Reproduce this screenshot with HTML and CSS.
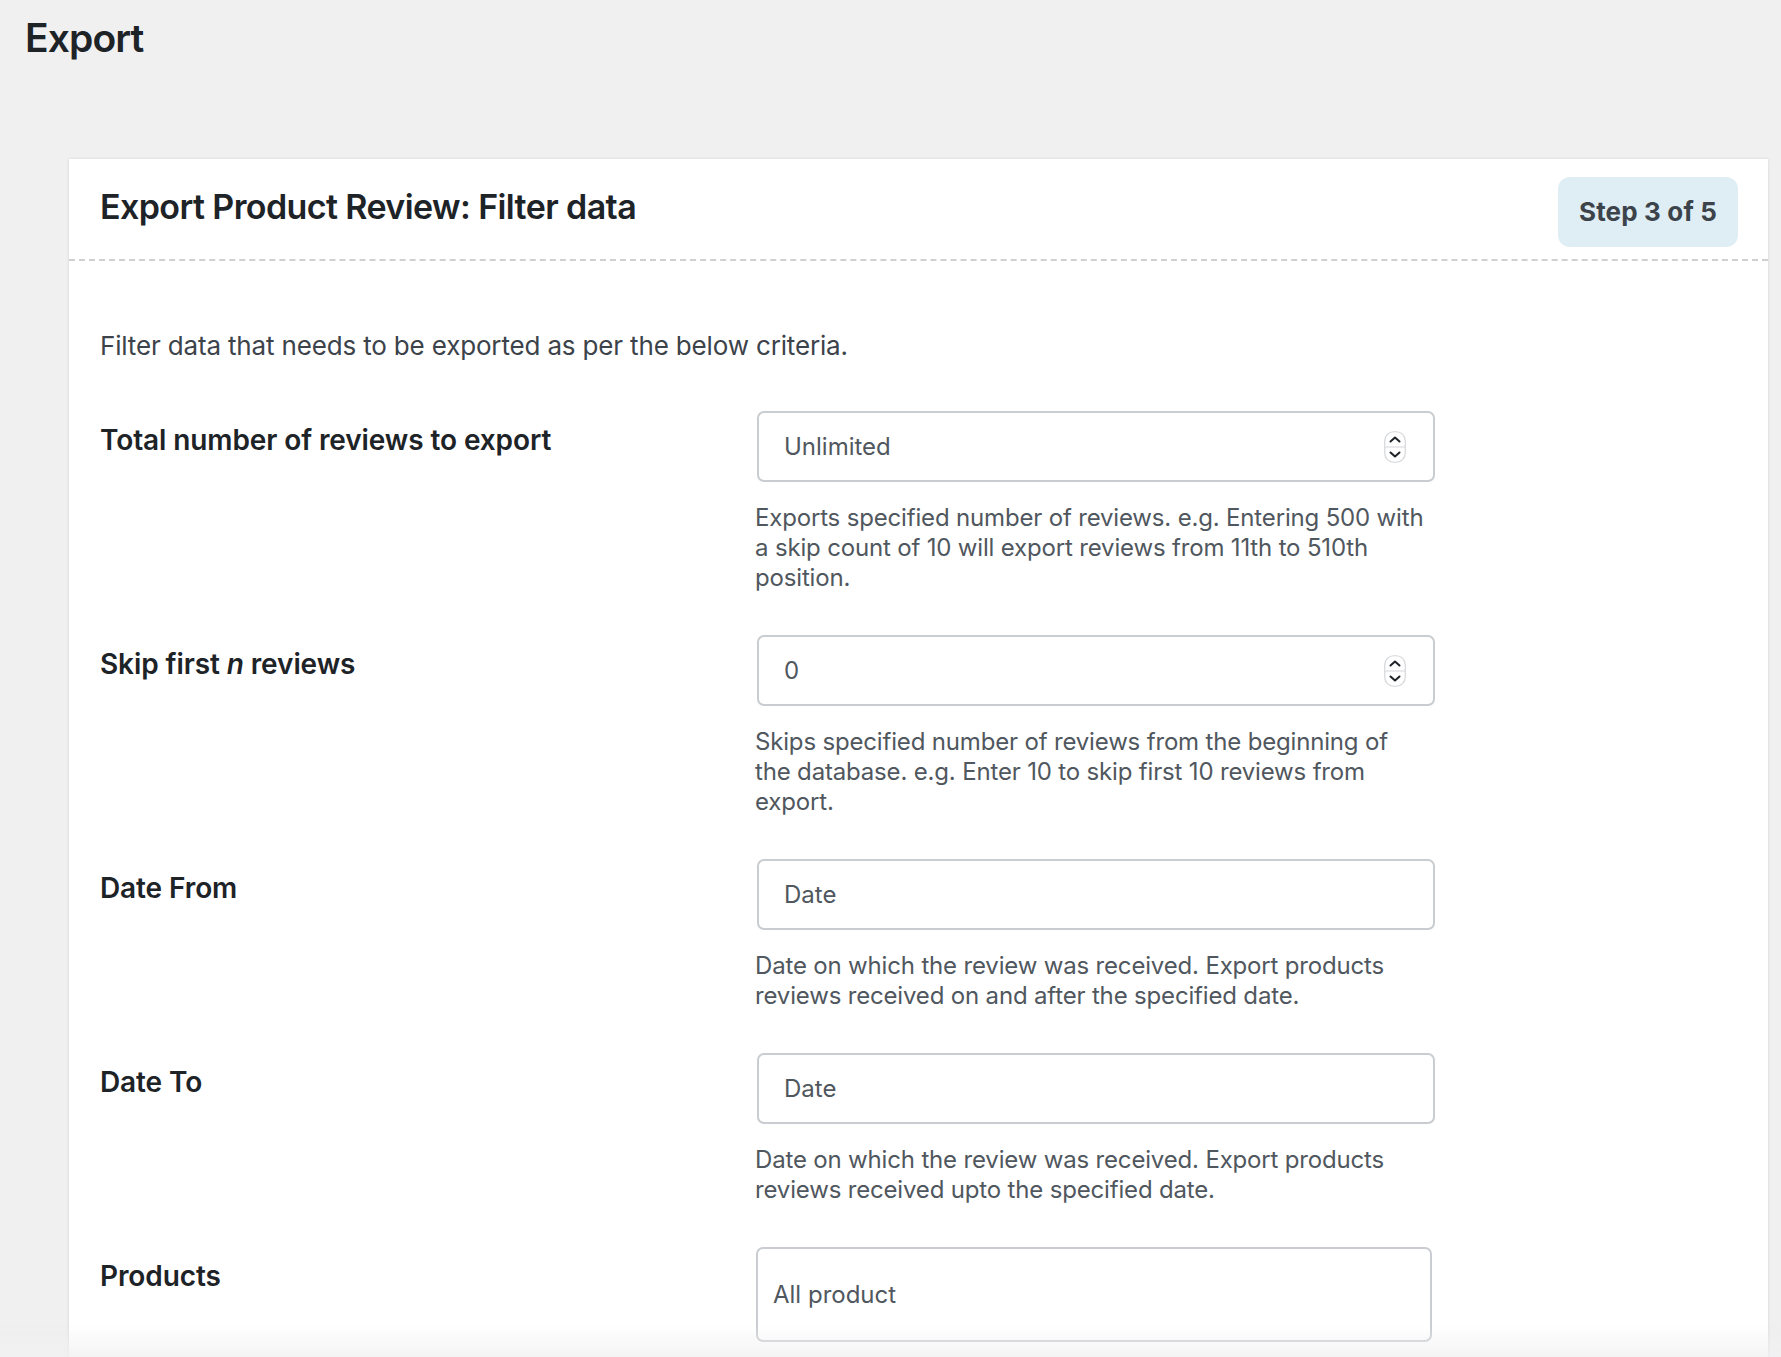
FILE: index.html
```html
<!DOCTYPE html>
<html lang="en">
<head>
<meta charset="utf-8">
<title>Export</title>
<link rel="stylesheet" href="styles.css">
</head>
<body>
<div class="wrap">
  <h1 class="page-title">Export</h1>
  <div class="card">
    <div class="card-head">
      <h2 class="card-title">Export Product Review: Filter data</h2>
      <span class="step">Step 3 of 5</span>
    </div>
    <div class="card-body">
      <p class="intro">Filter data that needs to be exported as per the below criteria.</p>
      <div class="form">
        <div class="row">
          <div class="label">Total number of reviews to export</div>
          <div class="field">
            <div class="input-wrap">
              <input class="input" type="text" placeholder="Unlimited">
              <span class="spin"><svg width="22" height="32" viewBox="0 0 22 32"><rect x="0.75" y="0.75" width="20.5" height="30.5" rx="9" fill="#fff" stroke="#d4d6d9" stroke-width="1.2"/><line x1="1" y1="16" x2="21" y2="16" stroke="#dcdde0" stroke-width="1.2"/><path d="M6.5 10.5 L11 6.5 L15.5 10.5" fill="none" stroke="#1d2327" stroke-width="2" stroke-linecap="round" stroke-linejoin="round"/><path d="M6.5 21.5 L11 25.5 L15.5 21.5" fill="none" stroke="#1d2327" stroke-width="2" stroke-linecap="round" stroke-linejoin="round"/></svg></span>
            </div>
            <p class="desc">Exports specified number of reviews. e.g. Entering 500 with a skip count of 10 will export reviews from 11th to 510th position.</p>
          </div>
        </div>
        <div class="row">
          <div class="label">Skip first <em>n</em> reviews</div>
          <div class="field">
            <div class="input-wrap">
              <input class="input" type="text" value="0">
              <span class="spin"><svg width="22" height="32" viewBox="0 0 22 32"><rect x="0.75" y="0.75" width="20.5" height="30.5" rx="9" fill="#fff" stroke="#d4d6d9" stroke-width="1.2"/><line x1="1" y1="16" x2="21" y2="16" stroke="#dcdde0" stroke-width="1.2"/><path d="M6.5 10.5 L11 6.5 L15.5 10.5" fill="none" stroke="#1d2327" stroke-width="2" stroke-linecap="round" stroke-linejoin="round"/><path d="M6.5 21.5 L11 25.5 L15.5 21.5" fill="none" stroke="#1d2327" stroke-width="2" stroke-linecap="round" stroke-linejoin="round"/></svg></span>
            </div>
            <p class="desc">Skips specified number of reviews from the beginning of the database. e.g. Enter 10 to skip first 10 reviews from export.</p>
          </div>
        </div>
        <div class="row">
          <div class="label">Date From</div>
          <div class="field">
            <div class="input-wrap">
              <input class="input" type="text" placeholder="Date">
            </div>
            <p class="desc">Date on which the review was received. Export products reviews received on and after the specified date.</p>
          </div>
        </div>
        <div class="row">
          <div class="label">Date To</div>
          <div class="field">
            <div class="input-wrap">
              <input class="input" type="text" placeholder="Date">
            </div>
            <p class="desc">Date on which the review was received. Export products reviews received upto the specified date.</p>
          </div>
        </div>
        <div class="row">
          <div class="label">Products</div>
          <div class="field">
            <div class="select-box">All product</div>
          </div>
        </div>
      </div>
    </div>
  </div>
</div>
<div class="fade"></div>
</body>
</html>
```

FILE: styles.css
```css
html, body {
  margin: 0;
  padding: 0;
}
body {
  background: #f0f0f1;
  font-family: Inter, "Noto Sans", "DejaVu Sans", sans-serif;
  color: #1d2327;
  overflow: hidden;
  height: 1357px;
}
.wrap {
  padding: 14px 13px 0 25px;
}
.page-title {
  margin: 0;
  font-size: 39px;
  line-height: 48px;
  font-weight: 600;
  color: #1d2327;
  letter-spacing: -0.9px;
}
.card {
  margin-top: 97px;
  margin-left: 44px;
  background: #fff;
  box-shadow: 0 0 3px rgba(0, 0, 0, 0.12);
  min-height: 1300px;
}
.card-head {
  display: flex;
  justify-content: space-between;
  align-items: flex-start;
  padding: 18px 30px 12px 31px;
  border-bottom: 2px dashed #cfd0d2;
}
.card-title {
  margin: 9px 0 0 0;
  font-size: 34px;
  line-height: 42px;
  font-weight: 600;
  color: #1d2327;
  letter-spacing: -0.6px;
}
.step {
  display: block;
  height: 70px;
  line-height: 70px;
  padding: 0 21px;
  border-radius: 12px;
  background: #dfeef4;
  color: #3c434a;
  font-size: 26px;
  font-weight: 700;
  letter-spacing: 0.15px;
}
.card-body {
  padding: 67px 31px 0 31px;
}
.intro {
  margin: 0 0 47px 0;
  font-size: 26px;
  line-height: 36px;
  color: #3c434a;
  letter-spacing: -0.16px;
}
.form {
  display: flex;
  flex-direction: column;
  gap: 42px;
}
.row {
  display: grid;
  grid-template-columns: 657px 678px;
}
.label {
  padding-top: 11px;
  font-size: 28px;
  line-height: 36px;
  font-weight: 600;
  color: #1d2327;
  letter-spacing: -0.1px;
}
.label em {
  font-style: italic;
}
.input-wrap {
  position: relative;
}
.input {
  display: block;
  box-sizing: border-box;
  width: 678px;
  height: 71px;
  margin: 0;
  padding: 0 25px;
  border: 2px solid #c9ccd0;
  border-radius: 7px;
  background: #fff;
  font-family: Inter, "Noto Sans", sans-serif;
  font-size: 24px;
  color: #50575e;
  outline: none;
}
.input::placeholder {
  color: #50575e;
  opacity: 1;
}
.spin {
  position: absolute;
  right: 29px;
  top: 20px;
  width: 22px;
  height: 32px;
  display: block;
}
.spin svg {
  display: block;
}
.desc {
  max-width: 672px;
  margin: 21px 0 0 -2px;
  font-size: 24px;
  line-height: 30px;
  color: #50575e;
  letter-spacing: -0.17px;
}
.select-box {
  box-sizing: border-box;
  width: 676px;
  height: 95px;
  margin-left: -1px;
  padding: 0 15px;
  border: 2px solid #c9ccd0;
  border-radius: 7px;
  display: flex;
  align-items: center;
  font-size: 24px;
  color: #50575e;
}
.fade {
  position: fixed;
  left: 0;
  right: 0;
  bottom: 0;
  height: 32px;
  background: linear-gradient(rgba(240, 240, 241, 0), rgba(240, 240, 241, 0.75));
  pointer-events: none;
}
```
